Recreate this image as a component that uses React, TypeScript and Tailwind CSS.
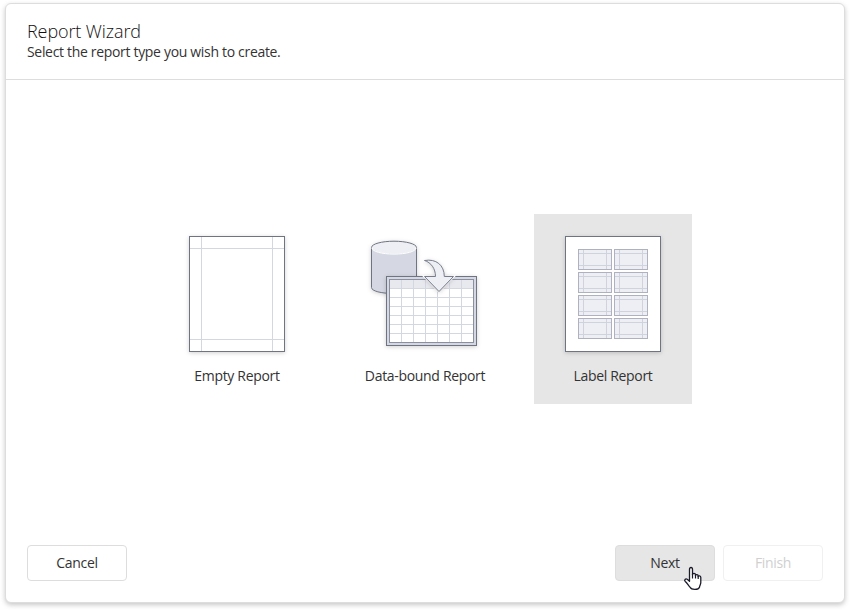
import React from 'react';

const pageShadow = 'drop-shadow-[0_1px_2px_rgba(0,0,0,0.18)]';

function EmptyIcon() {
  return (
    <svg width="96" height="116" viewBox="0 0 96 116" className={pageShadow} shapeRendering="crispEdges">
      <rect x="0.5" y="0.5" width="95" height="115" fill="#fff" />
      <path d="M12.5 1v114M83.5 1v114M1 12.5h94M1 103.5h94" stroke="#d4d6e0" fill="none" />
      <rect x="0.5" y="0.5" width="95" height="115" fill="none" stroke="#6f7482" />
    </svg>
  );
}

function DataIcon() {
  const arrow = 'M53.500 24.500C65 22.500 73.300 29 73.300 40.500H82.500L68 55.500 53.500 40.500h11C64.500 32.500 60 26.500 53.500 24.500z';
  return (
    <svg width="108" height="116" viewBox="0 0 108 116" className="overflow-visible">
      <g className={pageShadow}>
        <path d="M.5 11.5v40C.5 55 10 57.500 23 57.500S45.500 55 45.500 51.500v-40z" fill="#d5d8e2" stroke="#6f7482" />
        <ellipse cx="23" cy="11.500" rx="22.500" ry="6.200" fill="#eeeff4" />
        <path d="M.5 11.500C.5 8 10.600 5.200 23 5.200S45.500 8 45.500 11.500" fill="none" stroke="#6f7482" />
        <path d="M1 12c0 3.500 9.900 6.100 22 6.100S45 15.500 45 12" fill="none" stroke="#fff" />
      </g>
      <g className={pageShadow} shapeRendering="crispEdges">
        <rect x="15.500" y="40.500" width="90" height="69" fill="#d5d8e2" stroke="#6f7482" />
        <rect x="18.500" y="43.500" width="84" height="63" fill="#fff" />
        <rect x="19" y="44" width="83" height="8" fill="#e8e9ef" />
        <path d="M30.500 44v62M42.500 44v62M54.500 44v62M66.500 44v62M78.500 44v62M90.500 44v62M19 52.500h83M19 61.500h83M19 70.500h83M19 79.500h83M19 88.500h83M19 97.500h83" stroke="#d4d6e0" />
        <rect x="18.500" y="43.500" width="84" height="63" fill="none" stroke="#8b90a0" />
      </g>
      <path d={arrow} fill="#eeeff4" stroke="#fff" strokeWidth="2.500" />
      <path d={arrow} fill="#eeeff4" stroke="#777c8b" className={pageShadow} />
    </svg>
  );
}

function LabelIcon() {
  const labels = [13, 36, 59, 82].flatMap((y) => [13, 49].map((x) => ({ x, y })));
  return (
    <svg width="96" height="116" viewBox="0 0 96 116" className={pageShadow} shapeRendering="crispEdges">
      <rect x="0.5" y="0.5" width="95" height="115" fill="#fff" stroke="#6f7482" />
      {labels.map(({ x, y }) => (
        <g key={`${x}-${y}`} transform={`translate(${x} ${y})`}>
          <rect x="0.500" y="0.500" width="33" height="20" fill="#eeeff5" />
          <path d="M5.500 1v19M28.500 1v19M1 4.500h32M1 16.500h32" stroke="#d1d3dc" />
          <rect x="0.500" y="0.500" width="33" height="20" fill="none" stroke="#aeb2bf" />
        </g>
      ))}
    </svg>
  );
}

function HandCursor() {
  return (
    <svg width="20" height="25" viewBox="0 0 20 25" className="absolute left-[67px] top-[20px]">
      <path
        d="M6.500 15.200V3.500C6.500 .8 9.500 .8 9.500 3.500V8.700C9.500 7 12.500 7 12.500 9V9.700C12.500 8 15.200 8.200 15.200 10V10.700C15.200 9.300 17.800 9.500 17.800 11.500V16.500C17.800 18.500 16.500 19.700 16.500 21.200C15.500 24 8.500 24 7.300 21.500C5.500 20 4.500 17.500 2.300 15.500C.8 14 2.500 12.300 4.200 13.200z"
        fill="#fff"
        stroke="#1a1a2a"
        strokeWidth="1.300"
        strokeLinejoin="round"
      />
      <path d="M9.500 8v4.500M12.500 9v3.500M15.200 10v3" fill="none" stroke="#1a1a2a" strokeWidth="1.200" />
    </svg>
  );
}

const options = [
  { name: 'Empty Report', icon: <EmptyIcon />, selected: false },
  { name: 'Data-bound Report', icon: <DataIcon />, selected: false },
  { name: 'Label Report', icon: <LabelIcon />, selected: true },
];

export default function App() {
  return (
    <div className="h-[610px] w-[850px] bg-white pt-[3px] pl-[5px] font-['Open_Sans','Noto_Sans',sans-serif] text-[14px] tracking-[-0.32px] text-[#333]">
      <main className="flex h-[600px] w-[840px] flex-col rounded-[6px] border border-[#dddddd] bg-white shadow-[0_2px_5px_rgba(0,0,0,0.22)]">
        <header className="h-[76px] border-b border-[#dddddd] pt-[15px] pl-[21px]">
          <h1 className="text-[18px] leading-6 font-light tracking-[-0.1px] text-[#111]">Report Wizard</h1>
          <p className="leading-[17px]">Select the report type you wish to create.</p>
        </header>
        <section className="flex flex-1 justify-center gap-[30px] pt-[134px]">
          {options.map((o) => (
            <div key={o.name} className={`flex h-[190px] w-[158px] flex-col items-center pt-[22px] ${o.selected ? 'bg-[#e6e6e6]' : ''}`}>
              {o.icon}
              <span className="mt-[14px] leading-5 whitespace-nowrap">{o.name}</span>
            </div>
          ))}
        </section>
        <footer className="flex gap-2 px-[21px] pb-[21px]">
          <button className="mr-auto h-9 w-[100px] rounded-[4px] border border-[#dddddd] bg-white pb-0.5">Cancel</button>
          <button className="relative h-9 w-[100px] rounded-[4px] border border-[#dddddd] bg-[#e6e6e6] pb-0.5">
            Next
            <HandCursor />
          </button>
          <button className="h-9 w-[100px] rounded-[4px] border border-[#f0f0f0] bg-white pb-0.5 text-[#d0d0d0]">Finish</button>
        </footer>
      </main>
    </div>
  );
}
